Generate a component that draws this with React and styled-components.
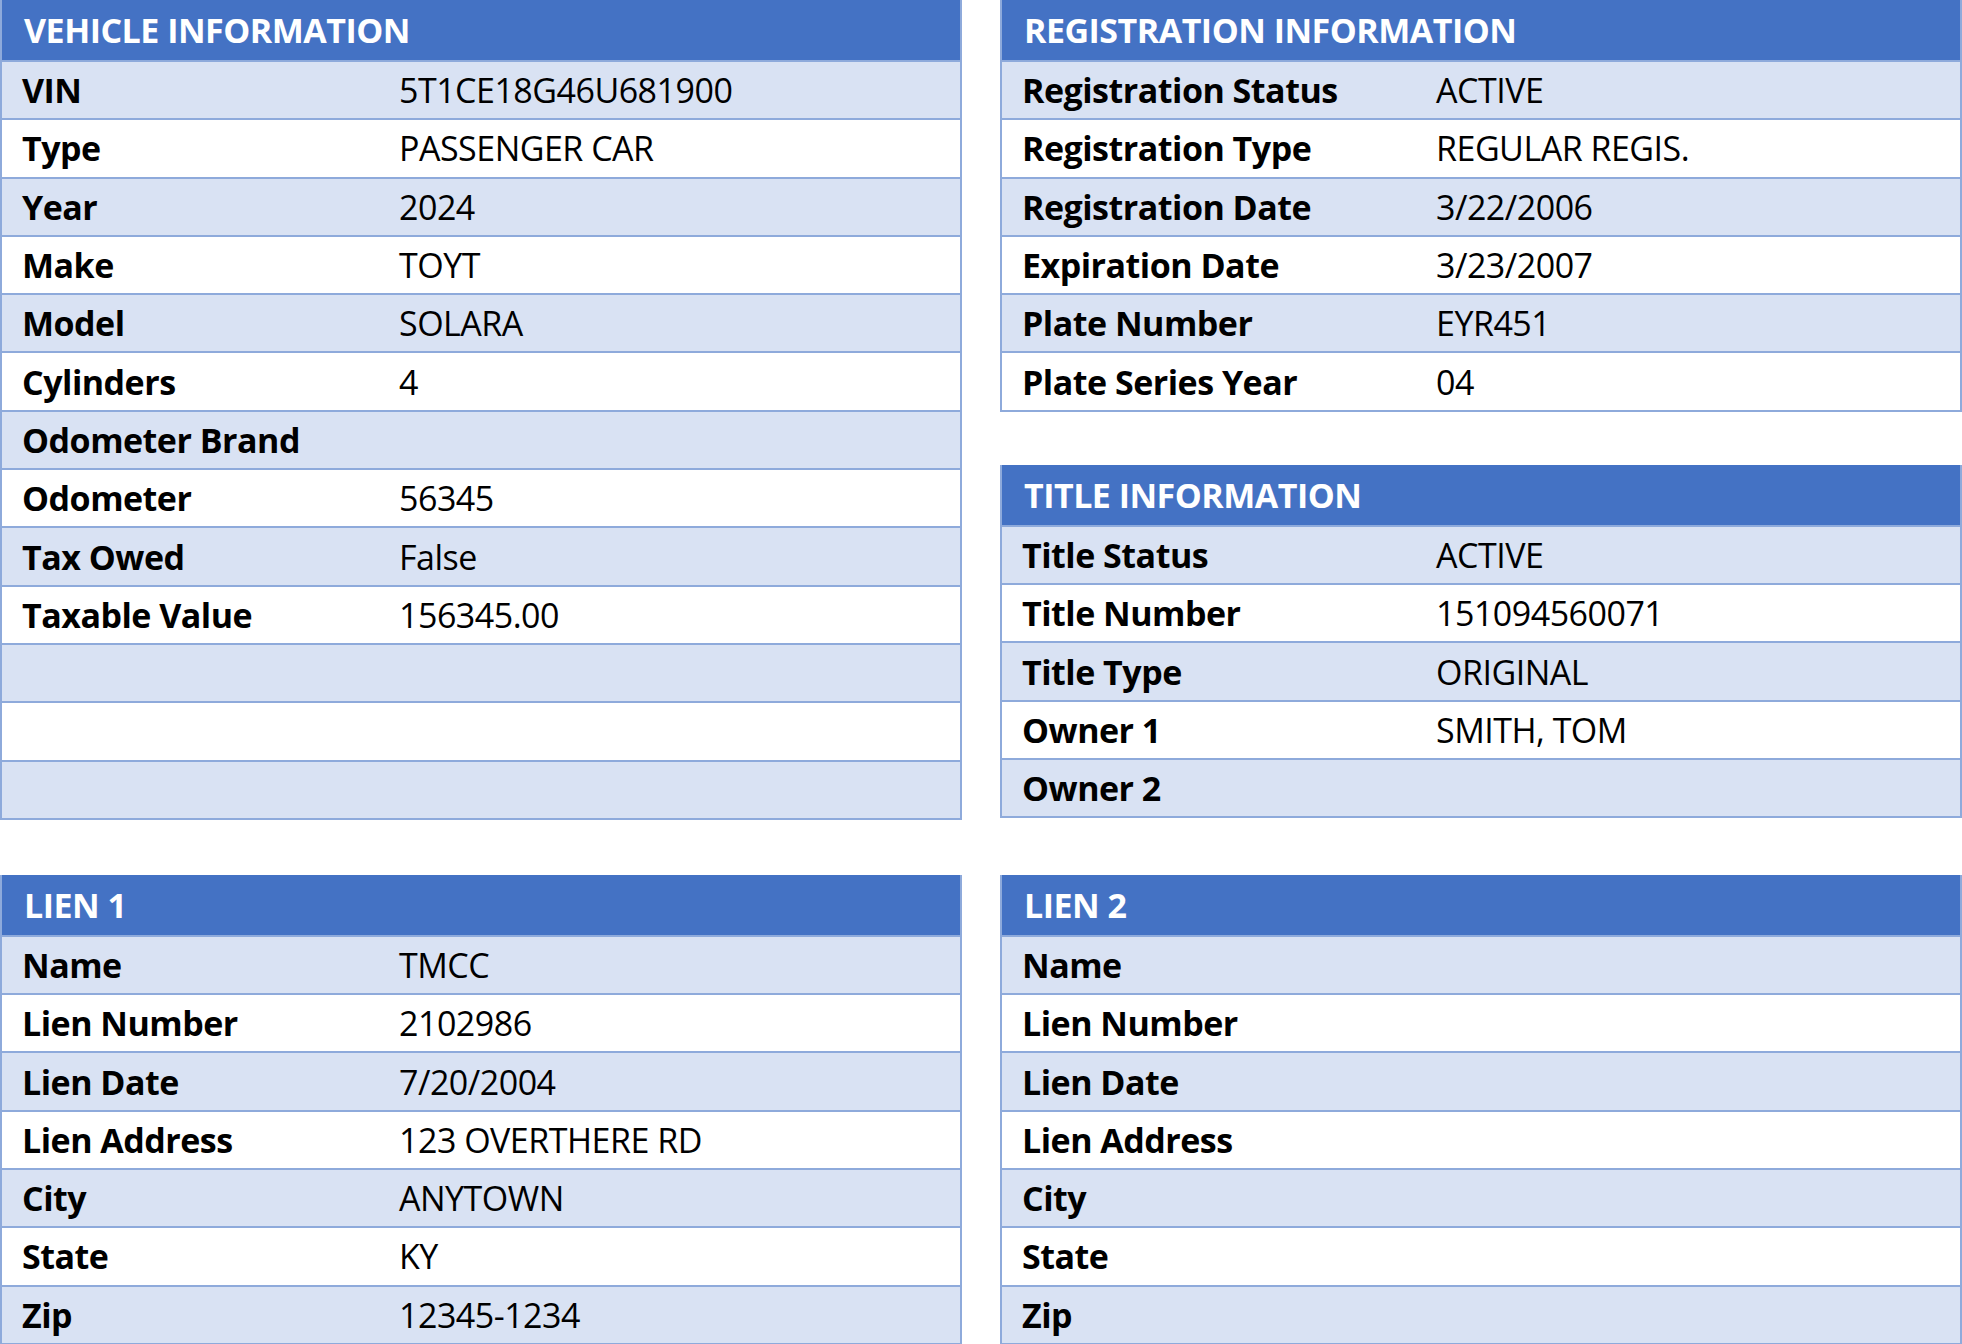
import styled, { createGlobalStyle } from 'styled-components';

const GlobalStyle = createGlobalStyle`
  body {
    margin: 0;
    background: #ffffff;
    font-family: 'Open Sans', 'Noto Sans', sans-serif;
  }
`;

const Page = styled.div`
  display: grid;
  grid-template-columns: 962px 962px;
  column-gap: 38px;
  row-gap: 55px;
  width: 1962px;
  align-items: start;
`;

const Stack = styled.div`
  display: flex;
  flex-direction: column;
  gap: 53px;
`;

const Table = styled.div`
  border: 2px solid #8eaadb;
  border-top: none;
`;

const Header = styled.div`
  height: 60px;
  background: #4472c4;
  color: #ffffff;
  font-weight: 700;
  font-size: 34px;
  letter-spacing: -0.5px;
  display: flex;
  align-items: center;
  padding-left: 22px;
`;

const Row = styled.div`
  height: 56.3px;
  display: grid;
  grid-template-columns: ${p => p.$labelWidth}px 1fr;
  align-items: center;
  padding-left: 20px;
  background: ${p => (p.$odd ? '#d9e2f3' : '#ffffff')};
  border-top: 2px solid #8eaadb;
  font-size: 34px;
  letter-spacing: -0.5px;
  color: #000000;
`;

const Label = styled.span`
  font-weight: 700;
`;

const Value = styled.span`
  font-weight: 400;
`;

const InfoTable = ({ title, rows, labelWidth }) => (
  <Table>
    <Header>{title}</Header>
    {rows.map(([label, value], i) => (
      <Row key={i} $odd={i % 2 === 0} $labelWidth={labelWidth}>
        <Label>{label}</Label>
        <Value>{value}</Value>
      </Row>
    ))}
  </Table>
);

const vehicle = [
  ['VIN', '5T1CE18G46U681900'],
  ['Type', 'PASSENGER CAR'],
  ['Year', '2024'],
  ['Make', 'TOYT'],
  ['Model', 'SOLARA'],
  ['Cylinders', '4'],
  ['Odometer Brand', ''],
  ['Odometer', '56345'],
  ['Tax Owed', 'False'],
  ['Taxable Value', '156345.00'],
  ['', ''],
  ['', ''],
  ['', ''],
];

const registration = [
  ['Registration Status', 'ACTIVE'],
  ['Registration Type', 'REGULAR REGIS.'],
  ['Registration Date', '3/22/2006'],
  ['Expiration Date', '3/23/2007'],
  ['Plate Number', 'EYR451'],
  ['Plate Series Year', '04'],
];

const title = [
  ['Title Status', 'ACTIVE'],
  ['Title Number', '151094560071'],
  ['Title Type', 'ORIGINAL'],
  ['Owner 1', 'SMITH, TOM'],
  ['Owner 2', ''],
];

const lien1 = [
  ['Name', 'TMCC'],
  ['Lien Number', '2102986'],
  ['Lien Date', '7/20/2004'],
  ['Lien Address', '123 OVERTHERE RD'],
  ['City', 'ANYTOWN'],
  ['State', 'KY'],
  ['Zip', '12345-1234'],
];

const lien2 = [
  ['Name', ''],
  ['Lien Number', ''],
  ['Lien Date', ''],
  ['Lien Address', ''],
  ['City', ''],
  ['State', ''],
  ['Zip', ''],
];

export default function App() {
  return (
    <>
      <GlobalStyle />
      <Page>
        <InfoTable title="VEHICLE INFORMATION" rows={vehicle} labelWidth={377} />
        <Stack>
          <InfoTable title="REGISTRATION INFORMATION" rows={registration} labelWidth={414} />
          <InfoTable title="TITLE INFORMATION" rows={title} labelWidth={414} />
        </Stack>
        <InfoTable title="LIEN 1" rows={lien1} labelWidth={377} />
        <InfoTable title="LIEN 2" rows={lien2} labelWidth={414} />
      </Page>
    </>
  );
}
